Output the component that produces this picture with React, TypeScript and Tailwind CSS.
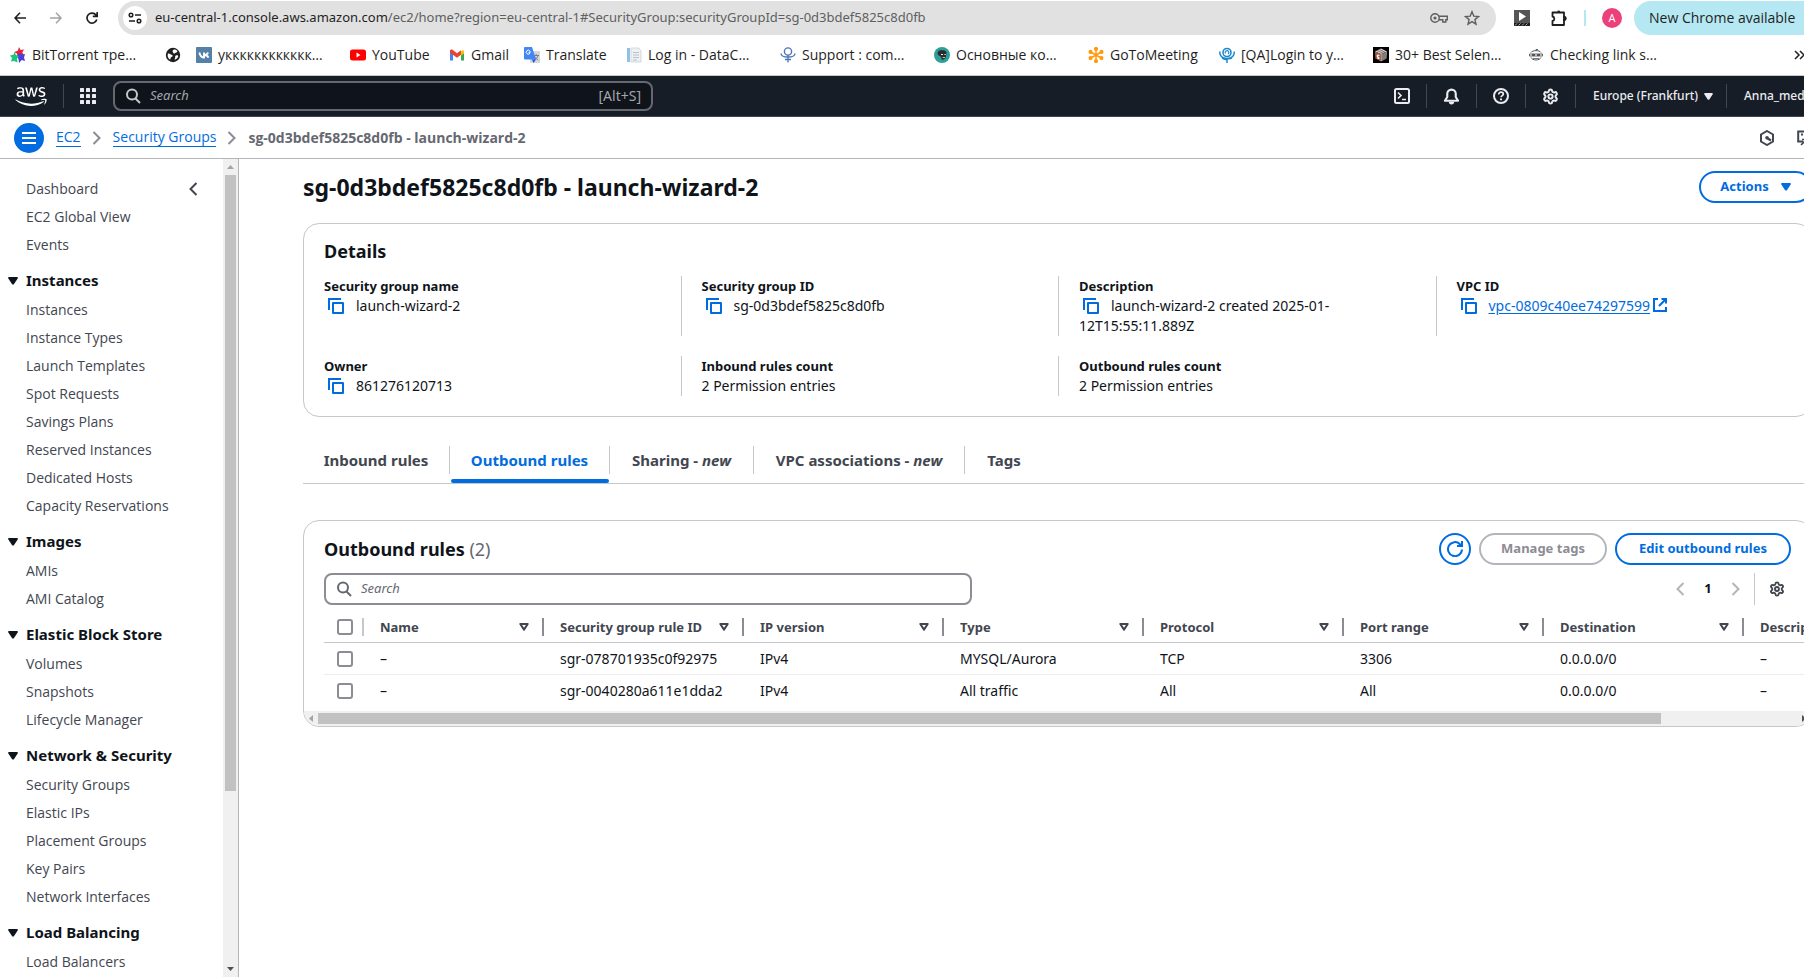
import React from "react";
import { Settings } from "lucide-react";

type IconProps = { className?: string };

const Glyph = ({ className = "size-4", children }: { className?: string; children: React.ReactNode }) => (
  <svg viewBox="0 0 16 16" className={`${className} shrink-0`} fill="none" stroke="currentColor" strokeWidth="2" aria-hidden="true">
    {children}
  </svg>
);

const SearchIcon = ({ className }: IconProps) => (
  <Glyph className={className}>
    <circle cx="7" cy="6.5" r="5" />
    <path d="M10.5 10.5 15 15" />
  </Glyph>
);

const CopyIcon = () => (
  <Glyph>
    <path d="M5 5h10v10H5z" strokeLinejoin="round" />
    <path d="M1 12V1h12" />
  </Glyph>
);

const ExternalIcon = () => (
  <Glyph className="ml-0.5 inline-block size-4 align-[-2px]">
    <path d="M9.500 2H14v4.500M7 9l7-7" />
    <path d="M6 2H2v12h12v-4" />
  </Glyph>
);

const CaretDown = ({ className = "size-2.5" }: IconProps) => (
  <svg viewBox="0 0 10 8" className={`${className} shrink-0`} fill="currentColor" aria-hidden="true">
    <path d="M.6 0h8.800L10 1 5.700 7.600H4.300L0 1z" />
  </svg>
);

const FilterCaret = () => (
  <svg viewBox="0 0 10 8" className="h-2 w-2.5 shrink-0" fill="none" stroke="currentColor" strokeWidth="2" strokeLinejoin="round" aria-hidden="true">
    <path d="M1.300 1h7.400L5 6.600z" />
  </svg>
);

const Chevron = ({ dir, className = "" }: { dir: "left" | "right"; className?: string }) => (
  <Glyph className={`size-4 ${className}`}>
    <path d={dir === "left" ? "M11.500 2 5.500 8l6 6" : "M4.500 2l6 6-6 6"} />
  </Glyph>
);

const bookmarks: { text: string; width: string; icon: React.ReactNode }[] = [
  {
    text: "BitTorrent тре…",
    width: "w-[155px]",
    icon: (
      <>
        <path d="M9 0l1.600 3 3.400-.4-1.700 3 2 3-4-.6L8 10 6.800 6.500 4 5l3.800-1.300z" fill="#e8233f" />
        <path d="M9 6l3 1.500L15 7l-1 3.500 1 3.500-3.300-1L9 16l-.5-4L7 9z" fill="#4a3fd6" />
        <path d="M4.500 5L6 8l3 1-2 2.500.5 4-3.500-1.500-3 .6 1-3.600L0 8.500l3.500-.7z" fill="#18c77a" />
      </>
    ),
  },
  {
    text: "",
    width: "w-[31px]",
    icon: (
      <>
        <circle cx="8" cy="8" r="7.200" fill="#1f1f1f" />
        <path d="M3 6.500c2-.5 2 .8 3.600 1.200S8 9.500 6.500 10s-.5 2.500-1.500 2.500C3 11.500 2 9 3 6.500zM8 3c1-1 3-.8 4 .6.800 1 .2 2-.8 1.900S10 7 9 6.500 7 4 8 3zM11 8.500c1.200-.4 2.300 0 2.300.6-.4 1.600-1.500 3-3.300 3.700-1-.6.300-1.500.2-2.500s-.1-1.400.8-1.800z" fill="#fff" />
      </>
    ),
  },
  {
    text: "укккккккккккк…",
    width: "w-[154px]",
    icon: (
      <>
        <rect width="16" height="16" rx="1" fill="#5580a8" />
        <path d="M3.300 5.500C4 8.500 5.500 10.500 8 10.500V5.500M8 8c2 0 3.500-1 4-2.500M8 8c2.200 0 3.700 1 4.500 2.700" fill="none" stroke="#fff" strokeWidth="1.900" />
      </>
    ),
  },
  {
    text: "YouTube",
    width: "w-[99px]",
    icon: (
      <>
        <rect y="2.500" width="16" height="11" rx="2.500" fill="#f00" />
        <path d="M6.500 5.500v5L10.500 8z" fill="#fff" />
      </>
    ),
  },
  {
    text: "Gmail",
    width: "w-[75px]",
    icon: (
      <>
        <path d="M1 4v9.500h3V7z" fill="#4285f4" />
        <path d="M15 4v9.500h-3V7z" fill="#34a853" />
        <path d="M12 4.500L13.500 3 15 4v2.500L12 8.500z" fill="#fbbc04" />
        <path d="M1 4.200C1 2.500 2.800 2.300 3.800 3L8 6.200 12 3.200v4.500L8 10.700 1 5.800z" fill="#ea4335" />
      </>
    ),
  },
  {
    text: "Translate",
    width: "w-[102px]",
    icon: (
      <>
        <rect x="6" y="4" width="10" height="12" rx="1" fill="#d5d7dc" />
        <path d="M9.500 8.500h5.500M12.200 7v1.500M14 8.500c-.5 2-2 3.800-3.500 4.500M10.800 9.500c.6 1.500 2 3 3.400 3.500" stroke="#7b8087" fill="none" />
        <path d="M1 0h7l4 12.500H1a1 1 0 0 1-1-1V1a1 1 0 0 1 1-1z" fill="#4285f4" />
        <path d="M8 12.500h4L9.500 16z" fill="#2a56c6" />
        <path d="M7 5H5v1.200h1A2 2 0 1 1 5.900 4" fill="none" stroke="#fff" />
      </>
    ),
  },
  {
    text: "Log in - DataC…",
    width: "w-[154px]",
    icon: (
      <>
        <path d="M1 1h3v14H1z" fill="#8fc1e3" />
        <path d="M5 1h8l2 3v11H5z" fill="#eef1f4" stroke="#c4cad0" strokeWidth=".7" />
        <path d="M7 5.500h6M7 8h6M7 10.500h6M7 13h4" stroke="#b9c0c8" />
      </>
    ),
  },
  {
    text: "Support : com…",
    width: "w-[154px]",
    icon: (
      <>
        <circle cx="8" cy="4.500" r="3.600" fill="none" stroke="#4a76b8" strokeWidth="1.400" />
        <path d="M8 8v7.500M5 12.500h6M1 6.500c0 2.500 2.500 3.500 7 3.500s7-1 7-3.500" fill="none" stroke="#4a76b8" strokeWidth="1.300" />
      </>
    ),
  },
  {
    text: "Основные ко…",
    width: "w-[154px]",
    icon: (
      <>
        <circle cx="8" cy="8" r="8" fill="#2c9f97" />
        <path d="M3.500 6C4 3 7 3 9 3.300s3.800.7 3.500 3.200-.5 3.500-1.500 5c-1 1.300-3 1.500-3.500.5s0-2-1-2.500S3.300 8 3.500 6z" fill="#2b2b33" />
        <path d="M7 7h2v1H7zM10.500 7h1.300v1h-1.300zM8.500 10h2.500v.8H8.500z" fill="#e9e9e9" />
      </>
    ),
  },
  {
    text: "GoToMeeting",
    width: "w-[131px]",
    icon: (
      <g stroke="#ff9a0a" strokeWidth="1.500" fill="#ff9a0a">
        <path d="M8 2v12M2.800 5l10.400 6M2.800 11l10.400-6" />
        <circle cx="8" cy="1.900" r="1.300" />
        <circle cx="8" cy="14.100" r="1.300" />
        <circle cx="2.500" cy="4.900" r="1.300" />
        <circle cx="13.500" cy="11.100" r="1.300" />
        <circle cx="2.500" cy="11.100" r="1.300" />
        <circle cx="13.500" cy="4.900" r="1.300" />
      </g>
    ),
  },
  {
    text: "[QA]Login to y…",
    width: "w-[154px]",
    icon: (
      <g fill="none" stroke="#1e88cc">
        <circle cx="8" cy="5.500" r="4" strokeWidth="1.600" />
        <path d="M6.500 6.500a1.800 1.800 0 1 1 2.500.5" strokeWidth="1.200" />
        <path d="M.8 4.500c-.3 4 2 7 7.200 7s7.500-3 7.200-7M3 11c2 1.500 4 1.500 5 1s3 .5 5-1M8 11v5" strokeWidth="1.500" />
      </g>
    ),
  },
  {
    text: "30+ Best Selen…",
    width: "w-[155px]",
    icon: (
      <>
        <rect width="16" height="16" fill="#000" />
        <path d="M2 4.500L8 7v7.500L2.500 11.500z" fill="#b8624a" />
        <path d="M8 7l6-2.500-.5 7L8 14.500z" fill="#9a9a9a" />
        <path d="M2 4.500L8 1.500l6 3L8 7z" fill="#d8d0c8" />
        <path d="M4 5v7M6 6v7.500M10 6.500V13M12 5.500v6.500M4 3.500l7 3M6.500 2.500l6 3" stroke="#4c3b36" strokeWidth=".6" />
        <path d="M6.500 8.500C4 7.500 3.500 9 5 10s1.500 2-.8 1" fill="none" stroke="#fff" strokeWidth="1.100" />
      </>
    ),
  },
  {
    text: "Checking link s…",
    width: "w-[160px]",
    icon: (
      <g fill="none" stroke="#555">
        <path d="M3 5.500C4.500 3 11.500 3 13 5.500M3 10.500C4.500 13.800 11.500 13.800 13 10.500" />
        <path d="M1.500 7h13v2h-13z" strokeWidth=".9" />
        <path d="M4 8h3M9 8h3" strokeWidth="1.800" />
        <path d="M8 4V2.500h2" strokeWidth=".9" />
        <path d="M5 11.500h6" strokeWidth=".8" />
      </g>
    ),
  },
];

const topLinks = ["Dashboard", "EC2 Global View", "Events"];
const sections = [
  {
    title: "Instances",
    items: ["Instances", "Instance Types", "Launch Templates", "Spot Requests", "Savings Plans", "Reserved Instances", "Dedicated Hosts", "Capacity Reservations"],
  },
  { title: "Images", items: ["AMIs", "AMI Catalog"] },
  { title: "Elastic Block Store", items: ["Volumes", "Snapshots", "Lifecycle Manager"] },
  { title: "Network & Security", items: ["Security Groups", "Elastic IPs", "Placement Groups", "Key Pairs", "Network Interfaces"] },
  { title: "Load Balancing", items: ["Load Balancers"] },
];

const columns = ["Name", "Security group rule ID", "IP version", "Type", "Protocol", "Port range", "Destination", "Description"];
const rows = [
  ["–", "sgr-078701935c0f92975", "IPv4", "MYSQL/Aurora", "TCP", "3306", "0.0.0.0/0", "–"],
  ["–", "sgr-0040280a611e1dda2", "IPv4", "All traffic", "All", "All", "0.0.0.0/0", "–"],
];

function BrowserBar() {
  return (
    <div className="shrink-0 overflow-hidden border-b border-[#c5cdc6] bg-white font-['Open_Sans','Noto_Sans',sans-serif] text-[#1f1f1f]">
      <div className="flex h-9 items-center">
        <button aria-label="Back" className="ml-3 flex size-4 shrink-0 items-center justify-center">
          <svg viewBox="0 0 12 12" className="size-3" fill="none" stroke="currentColor" strokeWidth="1.600">
            <path d="M12 6H1M6 .8 1 6l5 5.200" />
          </svg>
        </button>
        <button aria-label="Forward" className="ml-5 flex size-4 shrink-0 items-center justify-center text-[#a3a3a3]">
          <svg viewBox="0 0 12 12" className="size-3" fill="none" stroke="currentColor" strokeWidth="1.600">
            <path d="M0 6h11M6 .8 11 6l-5 5.200" />
          </svg>
        </button>
        <button aria-label="Reload" className="ml-5 flex size-4 shrink-0 items-center justify-center">
          <svg viewBox="0 0 12 12" className="size-3" fill="none" stroke="currentColor" strokeWidth="1.700">
            <path d="M10.800 7.500A5 5 0 1 1 10 3L11 4.200M11.200 0v4.400H6.800" />
          </svg>
        </button>
        <div className="ml-[18px] flex h-[34px] w-[1378px] shrink-0 items-center rounded-full bg-[#e1e1e1] pr-4 pl-[5px]">
          <button aria-label="View site information" className="flex size-6 shrink-0 items-center justify-center rounded-full bg-white">
            <svg viewBox="0 0 14 12" className="h-3 w-3.5" fill="none" stroke="currentColor" strokeWidth="1.500">
              <circle cx="3" cy="3" r="1.800" />
              <path d="M7 3h6M1 9h6" />
              <circle cx="11" cy="9" r="1.800" />
            </svg>
          </button>
          <p className="ml-2 grow truncate font-['Noto_Sans',sans-serif] text-[13px] text-[#5f5f5f]">
            <span className="text-[#1f1f1f]">eu-central-1.console.aws.amazon.com</span>
            /ec2/home?region=eu-central-1#SecurityGroup:securityGroupId=sg-0d3bdef5825c8d0fb
          </p>
          <button aria-label="Passwords" className="text-[#5f5f5f]">
            <svg viewBox="0 0 18 12" className="h-3 w-[18px]" fill="none" stroke="currentColor" strokeWidth="1.400">
              <circle cx="5" cy="6" r="4.200" />
              <circle cx="5" cy="6" r="1.600" fill="currentColor" stroke="none" />
              <path d="M9 4.300h8.300v3.400h-1.500v2.300h-3V7.700H9" />
            </svg>
          </button>
          <button aria-label="Bookmark this tab" className="ml-4 text-[#5f5f5f]">
            <svg viewBox="0 0 16 16" className="size-4" fill="none" stroke="currentColor" strokeWidth="1.400">
              <path d="M8 1.800l1.800 4.300 4.700.4-3.600 3.100 1.100 4.600L8 11.700l-4 2.500 1.100-4.600-3.600-3.100 4.700-.4z" />
            </svg>
          </button>
        </div>
        <button aria-label="Video extension" className="ml-[18px] shrink-0">
          <svg viewBox="0 0 16 16" className="size-4">
            <rect width="16" height="16" fill="#555" />
            <path d="M0 13h16v3H0z" fill="#1d1d1d" />
            <path d="M1 15.500l2-2M4.500 15.500l2-2M8 15.500l2-2M11.500 15.500l2-2" stroke="#ddd" strokeWidth=".8" />
            <path d="M5 2v9l7-4.500z" fill="#fff" />
          </svg>
        </button>
        <button aria-label="Extensions" className="ml-5 shrink-0">
          <svg viewBox="0 0 18 18" className="size-[18px]" fill="none" stroke="currentColor" strokeWidth="1.800">
            <path d="M2.500 3.500H14v4.500h.3a1.500 1.500 0 0 1 0 3H14v5H2.500v-4a2.300 2.300 0 0 0 0-4.500z" strokeLinejoin="round" />
            <path d="M7.300 2.900a1.400 1.400 0 0 1 2.800 0z" fill="currentColor" stroke="none" />
            <path d="M14 8.200a1.400 1.400 0 0 1 0 2.800z" fill="currentColor" />
          </svg>
        </button>
        <div className="ml-4 h-4 w-0.5 shrink-0 bg-[#b5e8f2]" />
        <button aria-label="Profile" className="ml-4 flex size-5 shrink-0 items-center justify-center rounded-full bg-[#ec407a] text-[11px] text-white">A</button>
        <button className="ml-3 h-[34px] w-[200px] shrink-0 rounded-l-full bg-[#b5e8f2] pl-[15px] text-left text-sm whitespace-nowrap text-[#1f1f1f]">
          New Chrome available
        </button>
      </div>
      <nav aria-label="Bookmarks" className="flex h-[38px] items-center mb-px pl-[10px]">
        {bookmarks.map((b, i) => (
          <a key={i} href="#" aria-label={b.text || "Website"} className={`${b.width} flex shrink-0 items-center gap-1.5 text-sm whitespace-nowrap`}>
            <svg viewBox="0 0 16 16" className="size-4 shrink-0" aria-hidden="true">
              {b.icon}
            </svg>
            {b.text}
          </a>
        ))}
        <button aria-label="More bookmarks" className="mr-[-2px] ml-auto shrink-0">
          <svg viewBox="0 0 12 10" className="h-2.5 w-3" fill="none" stroke="currentColor" strokeWidth="1.500">
            <path d="M1 1l4 4-4 4M6 1l4 4-4 4" />
          </svg>
        </button>
      </nav>
    </div>
  );
}

const NavRule = () => <div className="h-6 w-px shrink-0 bg-[#424650]" />;

function AwsNav() {
  return (
    <header className="flex h-[41px] shrink-0 items-center overflow-hidden border-b border-[#424650] bg-[#161d26] text-[#ebebf0]">
      <a href="#" aria-label="AWS home" className="ml-[15px] shrink-0">
        <svg viewBox="0 0 304 182" className="h-[19px] w-8" fill="#fff">
          <path d="M86.400 66.400c0 3.700.4 6.700 1.100 8.900.8 2.200 1.800 4.600 3.200 7.200.5.8.7 1.600.7 2.300 0 1-.6 2-1.900 3l-6.300 4.200c-.9.6-1.800.9-2.600.9-1 0-2-.5-3-1.400-1.400-1.500-2.600-3.100-3.600-4.700-1-1.700-2-3.600-3.100-5.900-7.800 9.200-17.600 13.800-29.400 13.800-8.400 0-15.100-2.400-20-7.200-4.900-4.800-7.400-11.200-7.400-19.200 0-8.500 3-15.400 9.100-20.600s14.200-7.800 24.500-7.800c3.400 0 6.900.3 10.600.8s7.500 1.300 11.500 2.200v-7.300c0-7.600-1.600-12.900-4.700-16-3.200-3.100-8.600-4.600-16.300-4.600-3.500 0-7.100.4-10.800 1.300s-7.300 2-10.800 3.400c-1.600.7-2.800 1.100-3.500 1.300s-1.200.3-1.600.3c-1.400 0-2.100-1-2.100-3.100v-4.900c0-1.600.2-2.800.7-3.500s1.400-1.400 2.800-2.100c3.500-1.800 7.700-3.300 12.600-4.500C41 1.900 46.200 1.300 51.700 1.300c11.900 0 20.600 2.700 26.200 8.100 5.500 5.400 8.300 13.600 8.300 24.600v32.400zM45.800 81.600c3.300 0 6.700-.6 10.300-1.800s6.800-3.400 9.500-6.400c1.600-1.900 2.800-4 3.400-6.400s1-5.300 1-8.700v-4.200c-2.900-.7-6-1.300-9.200-1.700s-6.300-.6-9.400-.6c-6.700 0-11.600 1.300-14.900 4s-4.900 6.500-4.900 11.500c0 4.700 1.200 8.200 3.700 10.600 2.400 2.500 5.900 3.700 10.500 3.700zm80.300 10.800c-1.800 0-3-.3-3.800-1-.8-.6-1.500-2-2.100-3.900L96.700 10.200c-.6-2-.9-3.300-.9-4 0-1.600.8-2.500 2.400-2.500h9.800c1.900 0 3.200.3 3.900 1 .8.600 1.400 2 2 3.900l16.800 66.200 15.600-66.200c.5-2 1.100-3.300 1.900-3.900s2.200-1 4-1h8c1.900 0 3.200.3 4 1 .8.600 1.500 2 1.900 3.900l15.800 67 17.300-67c.6-2 1.300-3.300 2-3.900.8-.6 2.100-1 3.900-1h9.300c1.600 0 2.500.8 2.500 2.500 0 .5-.1 1-.2 1.600s-.3 1.400-.7 2.500l-24.100 77.300c-.6 2-1.300 3.300-2.100 3.900s-2.100 1-3.800 1h-8.600c-1.900 0-3.200-.3-4-1s-1.500-2-1.900-4L156 23l-15.400 64.400c-.5 2-1.100 3.300-1.900 4s-2.200 1-4 1zm128.500 2.700c-5.200 0-10.400-.6-15.400-1.800s-8.900-2.500-11.500-4c-1.600-.9-2.700-1.900-3.100-2.800s-.6-1.900-.6-2.800v-5.100c0-2.100.8-3.100 2.300-3.100.6 0 1.200.1 1.800.3s1.500.6 2.500 1c3.400 1.500 7.100 2.700 11 3.500 4 .8 7.900 1.200 11.900 1.200 6.300 0 11.200-1.100 14.600-3.300s5.200-5.400 5.200-9.500c0-2.800-.9-5.100-2.700-7s-5.200-3.600-10.100-5.200L246 52c-7.300-2.300-12.700-5.700-16-10.200-3.300-4.400-5-9.300-5-14.500 0-4.200.9-7.900 2.700-11.100s4.200-6 7.200-8.200c3-2.300 6.400-4 10.400-5.200S253.500 1 257.900 1c2.200 0 4.500.1 6.700.4 2.300.3 4.400.7 6.500 1.100 2 .5 3.900 1 5.700 1.600s3.200 1.200 4.200 1.800c1.400.8 2.400 1.600 3 2.500s.9 2 .9 3.500v4.700c0 2.100-.8 3.200-2.300 3.200-.8 0-2.100-.4-3.800-1.200-5.700-2.600-12.100-3.900-19.200-3.900-5.700 0-10.200.9-13.300 2.800s-4.700 4.800-4.700 8.900c0 2.800 1 5.200 3 7.100s5.700 3.800 11 5.500l14.200 4.500c7.200 2.300 12.400 5.500 15.500 9.600s4.600 8.800 4.600 14c0 4.300-.9 8.200-2.600 11.600-1.800 3.400-4.200 6.400-7.300 8.800-3.100 2.500-6.800 4.300-11.100 5.600-4.500 1.400-9.200 2-14.300 2z" />
          <path d="M273.500 143.700c-32.900 24.300-80.700 37.200-121.800 37.200-57.600 0-109.500-21.300-148.700-56.700-3.100-2.800-.3-6.600 3.400-4.400 42.400 24.600 94.700 39.500 148.800 39.500 36.500 0 76.600-7.600 113.500-23.200 5.500-2.500 10.200 3.600 4.800 7.600z" />
          <path d="M287.200 128.100c-4.200-5.400-27.800-2.600-38.500-1.300-3.200.4-3.700-2.400-.8-4.500 18.800-13.200 49.700-9.400 53.300-5 3.600 4.500-1 35.400-18.600 50.200-2.700 2.300-5.300 1.100-4.100-1.900 4-9.900 12.900-32.200 8.700-37.500z" />
        </svg>
      </a>
      <div className="w-4 shrink-0" />
      <NavRule />
      <button aria-label="Services" className="ml-4 shrink-0">
        <svg viewBox="0 0 16 16" className="size-4" fill="currentColor">
          {[0, 6, 12].map((y) => [0, 6, 12].map((x) => <rect key={`${x}-${y}`} x={x} y={y} width="4" height="4" rx=".5" />))}
        </svg>
      </button>
      <label className="ml-[17px] flex h-[30px] w-[540px] items-center rounded-lg border-2 border-[#656871] bg-[#0f141a] px-2.5 text-[#a4a4ad]">
        <SearchIcon className="size-4 text-[#c6c6cd]" />
        <input aria-label="Search services" placeholder="Search" className="ml-[9px] min-w-0 grow bg-transparent text-[13px] outline-none placeholder:text-[#a4a4ad] placeholder:italic" />
        <span className="text-sm">[Alt+S]</span>
      </label>
      <div className="ml-auto flex shrink-0 items-center">
        <button aria-label="CloudShell" className="mr-4">
          <Glyph>
            <rect x="1" y="1" width="14" height="14" rx="1.500" />
            <path d="M4 4.500 7 7.500l-3 3M8 11.500h4" strokeWidth="1.600" />
          </Glyph>
        </button>
        <NavRule />
        <button aria-label="Notifications" className="mx-4">
          <Glyph className="size-[17px]">
            <path d="M8 1.500a4 4 0 0 0-4 4v3L1.800 12h12.400L12 8.500v-3a4 4 0 0 0-4-4z" strokeLinejoin="round" />
            <path d="M5.500 13a2.500 2.500 0 0 0 5 0z" fill="currentColor" stroke="none" />
          </Glyph>
        </button>
        <NavRule />
        <button aria-label="Help" className="mx-4">
          <Glyph>
            <circle cx="8" cy="8" r="7" />
            <path d="M5.700 6.500C5.700 5 6.700 4.200 8 4.200s2.300.8 2.300 2S8 7.800 8 9.200" strokeWidth="1.700" />
            <path d="M7 10.500h2v1.800H7z" fill="currentColor" stroke="none" />
          </Glyph>
        </button>
        <NavRule />
        <button aria-label="Settings" className="mx-4">
          <Settings className="size-[17px]" strokeWidth={2.800} />
        </button>
        <NavRule />
        <button className="ml-[17px] flex w-[133px] items-center gap-1.5 text-xs font-medium whitespace-nowrap">
          Europe (Frankfurt)
          <CaretDown className="h-[7px] w-[9px]" />
        </button>
        <NavRule />
        <button className="ml-[17px] w-[60px] text-left text-xs font-medium whitespace-nowrap">Anna_med</button>
      </div>
    </header>
  );
}

function BreadcrumbBar() {
  return (
    <div className="flex h-[42px] shrink-0 items-center overflow-hidden border-b border-[#b4b4bb] pl-[14px] text-sm">
      <button aria-label="Toggle navigation" className="flex size-[30px] shrink-0 items-center justify-center rounded-full bg-[#006ce0] text-white">
        <Glyph>
          <path d="M1 3h14M1 8h14M1 13h14" />
        </Glyph>
      </button>
      <nav aria-label="Breadcrumb" className="ml-3 flex items-center gap-2 font-['Open_Sans','Noto_Sans',sans-serif] whitespace-nowrap">
        <a href="#" className="border-b border-[#006ce0] leading-[18px] text-[#006ce0]">EC2</a>
        <Chevron dir="right" className="text-[#8c8c94]" />
        <a href="#" className="border-b border-[#006ce0] leading-[18px] text-[#006ce0]">Security Groups</a>
        <Chevron dir="right" className="text-[#8c8c94]" />
        <span className="font-bold text-[#656871]">sg-0d3bdef5825c8d0fb - launch-wizard-2</span>
      </nav>
      <div className="mr-[-9px] ml-auto flex shrink-0 items-center gap-[22px] text-[#424650]">
        <button aria-label="Amazon Q">
          <Glyph>
            <path d="M8 1l6 3.500v7L8 15l-6-3.500v-7z" />
            <path d="M8 8l4 2.500" strokeWidth="2.400" />
            <circle cx="8" cy="7.800" r="1.800" fill="currentColor" stroke="none" />
          </Glyph>
        </button>
        <button aria-label="Feedback">
          <Glyph>
            <path d="M6 11.500H1.200V1.500H15v10" />
            <path d="M4 4.500h2M7 4.500h2M10 4.500h2" />
            <path d="M4 15l5-5M5 9.500h4.500V14" strokeWidth="1.600" />
          </Glyph>
        </button>
      </div>
    </div>
  );
}

const SideLink = ({ text }: { text: string }) => (
  <li className="flex h-7 items-center">
    <a href="#">{text}</a>
  </li>
);

function Sidebar() {
  return (
    <aside className="flex w-[239px] shrink-0 border-r border-[#b4b4bb]">
      <nav aria-label="EC2" className="relative min-w-0 grow overflow-hidden pt-4 pl-[26px] font-['Open_Sans','Noto_Sans',sans-serif] text-sm whitespace-nowrap text-[#424650]">
        <button aria-label="Close navigation" className="absolute top-[22px] right-[22px]">
          <Chevron dir="left" />
        </button>
        <ul>{topLinks.map((t) => <SideLink key={t} text={t} />)}</ul>
        {sections.map((s) => (
          <section key={s.title}>
            <h2 className="mt-[7px] font-['Noto_Sans',sans-serif] text-[15px] font-bold text-[#0f141a]">
              <button className="-ml-[18px] flex h-[30px] items-center gap-2">
                <CaretDown className="h-2 w-2.5" />
                {s.title}
              </button>
            </h2>
            <ul>{s.items.map((t) => <SideLink key={t} text={t} />)}</ul>
          </section>
        ))}
      </nav>
      <div className="flex w-[15px] shrink-0 flex-col items-center bg-[#f0f0f0]">
        <svg viewBox="0 0 7 4" className="my-[6px] h-1 w-[7px] shrink-0" fill="#a3a3a3"><path d="M0 4l3.500-4L7 4z" /></svg>
        <div className="w-[11px] grow-[618] basis-0 bg-[#c1c1c1]" />
        <div className="grow-[170] basis-0" />
        <svg viewBox="0 0 7 4" className="my-[6px] h-1 w-[7px] shrink-0" fill="#505050"><path d="M0 0l3.500 4L7 0z" /></svg>
      </div>
    </aside>
  );
}

const Detail = ({ label, copy, children }: { label: string; copy?: boolean; children: React.ReactNode }) => (
  <div className="border-l border-[#c6c6cd] pl-5 leading-5 [&:nth-child(4n+1)]:border-transparent">
    <dt className="text-[13px] leading-5 font-bold">{label}</dt>
    <dd>
      {copy && (
        <button aria-label={`Copy ${label}`} className="mr-3 ml-1 inline-block h-4 align-[-3px] text-[#006ce0]">
          <CopyIcon />
        </button>
      )}
      {children}
    </dd>
  </div>
);

function DetailsCard() {
  return (
    <section className="rounded-2xl border border-[#c6c6cd] px-5 pt-[15px] pb-5">
      <h2 className="text-lg leading-6 font-bold">Details</h2>
      <dl className="mt-[13px] -mr-0.5 -ml-[21px] grid auto-rows-auto grid-cols-4 gap-5 text-sm leading-5">
        <Detail label="Security group name" copy>launch-wizard-2</Detail>
        <Detail label="Security group ID" copy>sg-0d3bdef5825c8d0fb</Detail>
        <Detail label="Description" copy>launch-wizard-2 created 2025-01-12T15:55:11.889Z</Detail>
        <Detail label="VPC ID" copy>
          <a href="#" className="text-[#006ce0] underline underline-offset-2">
            vpc-0809c40ee74297599
            <ExternalIcon />
          </a>
        </Detail>
        <Detail label="Owner" copy>861276120713</Detail>
        <Detail label="Inbound rules count">2 Permission entries</Detail>
        <Detail label="Outbound rules count">2 Permission entries</Detail>
      </dl>
    </section>
  );
}

const tabs = [
  { text: "Inbound rules", width: "w-[147px]" },
  { text: "Outbound rules", width: "w-[160px]", active: true },
  { text: "Sharing - ", isNew: true, width: "w-[144px]" },
  { text: "VPC associations - ", isNew: true, width: "w-[211px]" },
  { text: "Tags", width: "w-[78px]" },
];

function Tabs() {
  return (
    <div role="tablist" className="mt-[29px] flex border-b border-[#c6c6cd] text-[15px] font-bold whitespace-nowrap text-[#424650]">
      {tabs.map((t, i) => (
        <div key={t.text} className={`${t.width} relative h-[37px]`}>
          <button role="tab" aria-selected={!!t.active} className={`h-7 w-full ${i < tabs.length - 1 ? "border-r border-[#c6c6cd]" : ""} ${t.active ? "text-[#006ce0]" : ""}`}>
            {t.text}
            {t.isNew && <i>new</i>}
          </button>
          {t.active && <div className="absolute right-px bottom-0 left-px h-1 rounded-full bg-[#006ce0]" />}
        </div>
      ))}
    </div>
  );
}

const Check = ({ label }: { label: string }) => (
  <input type="checkbox" aria-label={label} className="block size-4 appearance-none rounded-[3px] border-2 border-[#8c8c94] bg-white" />
);

function RulesCard() {
  return (
    <section className="mt-9 overflow-hidden rounded-2xl border border-[#c6c6cd]">
      <div className="px-5 pt-3">
        <div className="flex items-center text-[13px] font-bold">
          <h2 className="grow text-lg leading-8">
            Outbound rules <span className="font-normal text-[#656871]">(2)</span>
          </h2>
          <button aria-label="Refresh" className="flex size-8 items-center justify-center rounded-full border-2 border-[#006ce0] text-[#006ce0]">
            <Glyph>
              <path d="M15 8.500a7 7 0 1 1-2-5.300L15 5" />
              <path d="M15 0v5h-5" />
            </Glyph>
          </button>
          <button disabled className="ml-2 h-8 w-32 rounded-full border-2 border-[#b4b4bb] text-[#8c8c94]">Manage tags</button>
          <button className="ml-2 h-8 w-44 rounded-full border-2 border-[#006ce0] text-[#006ce0]">Edit outbound rules</button>
        </div>
        <div className="mt-2 flex items-center">
          <label className="flex h-8 w-[648px] items-center rounded-lg border-2 border-[#8c8c94] px-2.5">
            <SearchIcon className="size-4 text-[#656871]" />
            <input aria-label="Find rules" placeholder="Search" className="ml-[9px] min-w-0 grow text-[13px] outline-none placeholder:text-[#656871] placeholder:italic" />
          </label>
          <div className="ml-auto flex items-center">
            <button aria-label="Previous page" disabled className="text-[#b4b4bb]"><Chevron dir="left" /></button>
            <button className="w-10 text-[13px] font-bold">1</button>
            <button aria-label="Next page" disabled className="text-[#b4b4bb]"><Chevron dir="right" /></button>
            <div className="ml-2.5 h-8 w-px bg-[#c6c6cd]" />
            <button aria-label="Preferences" className="mr-[6px] ml-[14px] text-[#424650]">
              <Settings className="size-4" strokeWidth={2.800} />
            </button>
          </div>
        </div>
      </div>
      <div className="mt-[7px] overflow-hidden pb-[5px] pl-5">
        <table className="w-[1620px] table-fixed border-separate border-spacing-0 text-left text-sm">
          <colgroup>
            <col className="w-10" />
            <col className="w-[180px]" />
            {columns.slice(1).map((c) => <col key={c} className="w-[200px]" />)}
          </colgroup>
          <thead>
            <tr className="h-[31px] text-[13px] text-[#424650]">
              <th className="border-b border-[#c6c6cd] p-0">
                <div className="flex h-[18px] items-center justify-between border-r-2 border-[#c6c6cd] pl-[13px]">
                  <Check label="Select all rules" />
                </div>
              </th>
              {columns.map((c) => (
                <th key={c} className="border-b border-[#c6c6cd] p-0">
                  <div className="flex h-[18px] items-center justify-between border-r-2 border-[#8c8c94] pr-[13px] pl-4 leading-[18px] whitespace-nowrap">
                    {c}
                    <FilterCaret />
                  </div>
                </th>
              ))}
            </tr>
          </thead>
          <tbody>
            {rows.map((r, i) => (
              <tr key={r[1]} className={i === 0 ? "h-8 *:border-b *:border-[#ebebf0]" : "h-[31px]"}>
                <td className="p-0 pl-[13px]">
                  <Check label={`Select ${r[1]}`} />
                </td>
                {r.map((v, j) => (
                  <td key={j} className="p-0 pl-4">{v}</td>
                ))}
              </tr>
            ))}
          </tbody>
        </table>
      </div>
      <div className="flex h-[15px] items-center bg-[#f0f0f0]">
        <svg viewBox="0 0 4 7" className="mx-[5px] h-[7px] w-1 shrink-0" fill="#a3a3a3"><path d="M4 0v7L0 3.500z" /></svg>
        <div className="h-[11px] grow-[1341] basis-0 bg-[#c1c1c1]" />
        <div className="grow-[136] basis-0" />
        <svg viewBox="0 0 4 7" className="mx-[5px] h-[7px] w-1 shrink-0" fill="#505050"><path d="M0 0v7l4-3.500z" /></svg>
      </div>
    </section>
  );
}

export default function App() {
  return (
    <div className="flex h-screen flex-col overflow-hidden bg-white font-['Noto_Sans','Open_Sans',sans-serif] text-[#0f141a]">
      <BrowserBar />
      <AwsNav />
      <BreadcrumbBar />
      <div className="flex min-h-0 grow">
        <Sidebar />
        <main className="min-w-0 grow overflow-hidden pt-3 pl-16">
          <div className="-mr-2">
            <div className="mb-5 flex h-8 items-center justify-between">
              <h1 className="text-[23px] font-bold">sg-0d3bdef5825c8d0fb - launch-wizard-2</h1>
              <button className="flex h-8 w-[113px] items-center justify-center gap-3 rounded-full border-2 border-[#006ce0] text-[13px] font-bold text-[#006ce0]">
                Actions
                <CaretDown className="h-2 w-2.5" />
              </button>
            </div>
            <DetailsCard />
            <Tabs />
            <RulesCard />
          </div>
        </main>
      </div>
    </div>
  );
}
